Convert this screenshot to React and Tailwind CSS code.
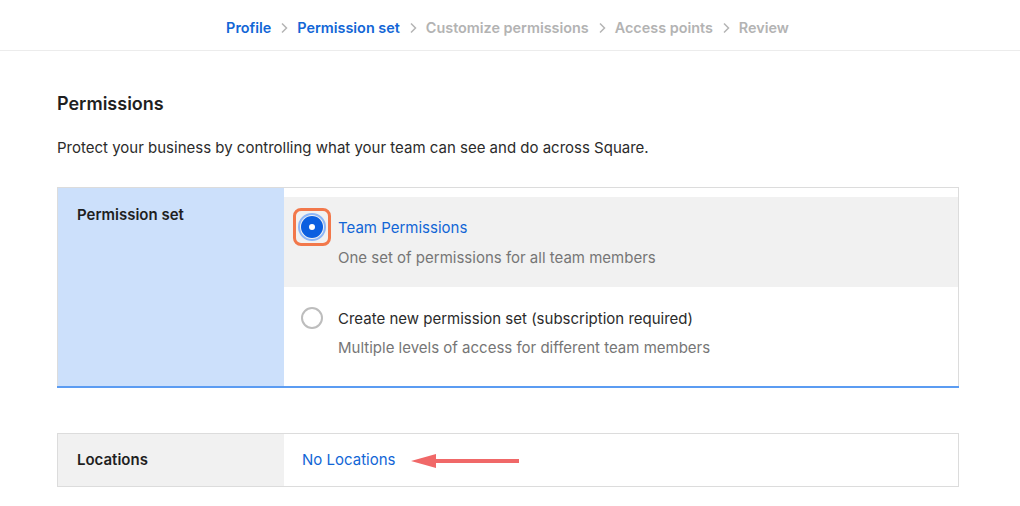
import React from 'react';

const steps = [
  { label: 'Profile', done: true },
  { label: 'Permission set', done: true },
  { label: 'Customize permissions', done: false },
  { label: 'Access points', done: false },
  { label: 'Review', done: false },
];

const Chevron = () => (
  <svg width="8" height="12" viewBox="0 0 8 12" className="mx-[9px]">
    <path d="M2 1.5 L6.5 6 L2 10.5" fill="none" stroke="#b5b5b5" strokeWidth="1.5" />
  </svg>
);

const Radio = ({ checked }) =>
  checked ? (
    <span className="flex h-[38px] w-[38px] items-center justify-center rounded-[8px] border-[3px] border-[#f2784b]">
      <span className="flex h-[28px] w-[28px] items-center justify-center rounded-full border-2 border-[#8db6f7]">
        <span className="flex h-[22px] w-[22px] items-center justify-center rounded-full bg-[#0b5fe0]">
          <span className="h-[6px] w-[6px] rounded-full bg-white" />
        </span>
      </span>
    </span>
  ) : (
    <span className="flex h-[38px] w-[38px] items-center justify-center">
      <span className="h-[22px] w-[22px] rounded-full border-2 border-[#bdbdbd] bg-white" />
    </span>
  );

export default function App() {
  return (
    <div className="min-h-screen w-[1020px] bg-white text-[#1f1f1f]" style={{ fontFamily: 'Inter, "Liberation Sans", sans-serif' }}>
      {/* Stepper */}
      <div className="flex h-[51px] items-center justify-center border-b border-[#ececec] pl-[3px] pr-[8px] pt-[6px]">
        {steps.map((s, i) => (
          <React.Fragment key={s.label}>
            {i > 0 && <Chevron />}
            <span className={`text-[14.4px] font-semibold ${s.done ? 'text-[#1266d6]' : 'text-[#b3b3b3]'}`}>{s.label}</span>
          </React.Fragment>
        ))}
      </div>

      <div className="pl-[57px] pr-[61px]">
        <h1 className="mt-[42px] text-[18px] font-semibold leading-[22px]">Permissions</h1>
        <p className="mt-[23px] text-[15px] leading-[20px] text-[#2b2b2b]">
          Protect your business by controlling what your team can see and do across Square.
        </p>

        {/* Permission set */}
        <div className="mt-[29px] flex h-[199px] border border-b-0 border-[#dcdcdc]">
          <div className="w-[226px] shrink-0 bg-[#cce0fb] px-[19px] pt-[16px] text-[15px] font-semibold">Permission set</div>
          <div className="flex flex-1 flex-col pt-[9px]">
            <div className="flex h-[90px] gap-[7px] bg-[#f1f1f1] pl-[9px] pt-[11px]">
              <Radio checked />
              <div className="pt-[11px]">
                <div className="text-[15px] leading-[18px] text-[#1266d6]">Team Permissions</div>
                <div className="mt-[12px] text-[15px] leading-[18px] text-[#767676]">One set of permissions for all team members</div>
              </div>
            </div>
            <div className="flex flex-1 gap-[7px] bg-white pl-[9px] pt-[12px]">
              <Radio />
              <div className="pt-[11px]">
                <div className="text-[15px] leading-[18px] text-[#2b2b2b]">Create new permission set (subscription required)</div>
                <div className="mt-[11px] text-[15px] leading-[18px] text-[#767676]">Multiple levels of access for different team members</div>
              </div>
            </div>
          </div>
        </div>
        <div className="h-[2px] bg-[#5b9cf2]" />

        {/* Locations */}
        <div className="mt-[45px] flex h-[54px] border border-[#dcdcdc]">
          <div className="flex w-[226px] shrink-0 items-center bg-[#f1f1f1] px-[19px] pt-[1px] text-[15px] font-semibold">Locations</div>
          <div className="flex items-center pl-[18px] pt-[1px]">
            <span className="text-[15px] text-[#1266d6]">No Locations</span>
            <svg width="108" height="16" viewBox="0 0 108 16" className="ml-[16px]">
              <path d="M0 8 L25 1 L25 15 Z" fill="#f06868" />
              <rect x="23" y="6" width="85" height="4" fill="#f06868" />
            </svg>
          </div>
        </div>
      </div>
    </div>
  );
}
